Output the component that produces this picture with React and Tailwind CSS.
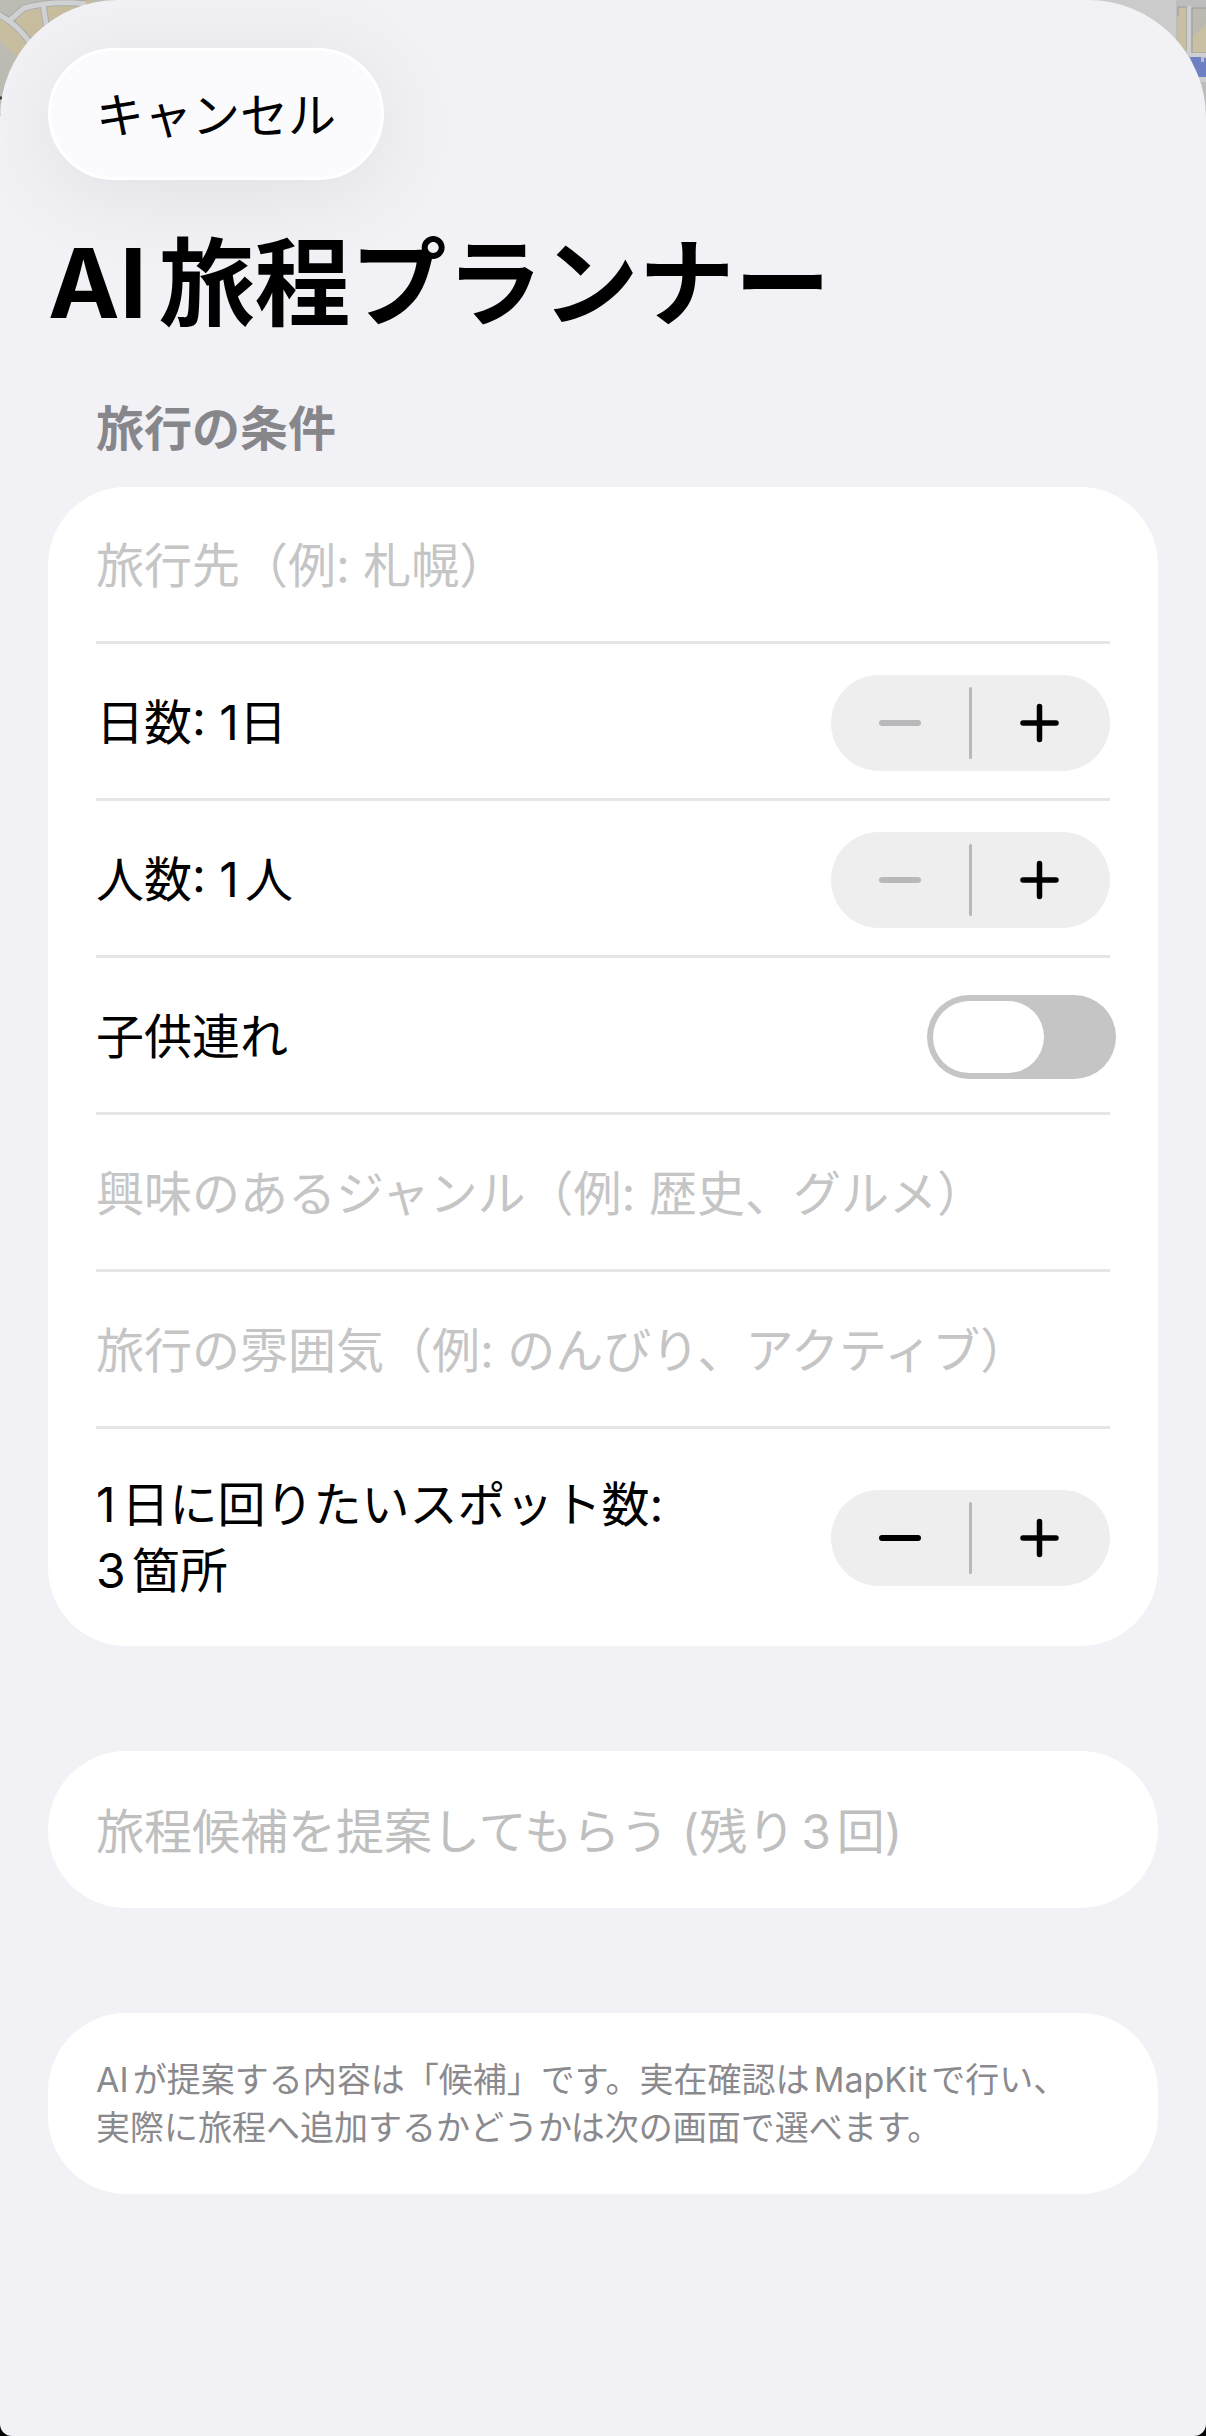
import { useState } from "react";

function Stepper({ label, value, min, onChange }) {
  return (
    <div className="flex h-24 w-[279px] shrink-0 items-center rounded-full bg-[#eeeeee]">
      <button
        type="button"
        aria-label={`${label}を減らす`}
        disabled={value <= min}
        onClick={() => onChange(value - 1)}
        className="flex h-full flex-1 items-center justify-center text-black disabled:text-[#b8b8ba]"
      >
        <svg className="h-12 w-12" viewBox="0 0 48 48" stroke="currentColor" strokeWidth="6" strokeLinecap="round">
          <path d="M6 24H42" />
        </svg>
      </button>
      <span className="h-[72px] w-[3px] rounded-full bg-[#b8b8ba]" />
      <button
        type="button"
        aria-label={`${label}を増やす`}
        onClick={() => onChange(value + 1)}
        className="flex h-full flex-1 items-center justify-center text-black"
      >
        <svg className="h-12 w-12" viewBox="0 0 48 48" stroke="currentColor" strokeWidth="5.5" strokeLinecap="round">
          <path d="M6 24H39M22.5 7.5V40.5" />
        </svg>
      </button>
    </div>
  );
}

function Row({ children }) {
  return (
    <div className="flex min-h-[157px] items-center justify-between gap-4 border-b-[3px] border-[#e6e6e6] pt-1 last:min-h-[217px] last:border-b-0 last:pt-0">
      {children}
    </div>
  );
}

function TextRow({ label, placeholder }) {
  return (
    <Row>
      <input
        type="text"
        aria-label={label}
        placeholder={placeholder}
        className="w-full bg-transparent leading-[66px] outline-none placeholder:text-[#c5c5c6]"
      />
    </Row>
  );
}

function MapBackdrop() {
  return (
    <div className="absolute inset-x-0 top-0 flex h-48 justify-between bg-[#cbcbcb]">
      <svg className="h-48 w-48" viewBox="0 0 192 192" fill="none">
        <path fill="#c9bd9f" d="M0 0H192V192H0Z" />
        <path fill="#bcbbb4" d="M0 40L22 62L14 192H0ZM0 0H70V3L24 9L10 20L0 12ZM92 0H192V10H92Z" />
        <path stroke="#aaacab" strokeWidth="7" d="M-2 14C12 21 24 33 34 48M10 20L24 8Q52 0 86 4M43 4L47 30" />
        <path stroke="#cfd1d2" strokeWidth="5" d="M-2 14C12 21 24 33 34 48M10 20L24 8Q52 0 86 4M43 4L47 30" />
        <path stroke="#333" strokeWidth="3" d="M0 98H4M0 115H2" />
      </svg>
      <svg className="h-48 w-[30px]" viewBox="0 0 30 192">
        <path fill="#bdbdbd" d="M0 0H30V192H0Z" />
        <path fill="#c9bfa3" d="M2 7H11V50H2ZM16 38L30 24V53H16Z" />
        <path fill="#bcb9b0" d="M16 8H30V24L16 38Z" />
        <path fill="none" stroke="#9a9aa0" d="M2 16V7H11V50M30 8H16V53H30" />
        <path fill="#cdcfd0" d="M11 6H15V56H11ZM14 53H30V57H14ZM20 77H30V82H20Z" />
        <path fill="#6f7fc4" d="M14 57H25V62H28V58H30V77H20Z" />
      </svg>
    </div>
  );
}

export default function App() {
  const [days, setDays] = useState(1);
  const [people, setPeople] = useState(1);
  const [spots, setSpots] = useState(3);
  const [withKids, setWithKids] = useState(false);

  return (
    <div className="relative bg-black font-['Inter','Noto_Sans_CJK_JP',sans-serif] text-[48px] leading-[66px] text-black [text-autospace:normal]" lang="ja">
      <MapBackdrop />
      <main className="relative min-h-screen rounded-t-[118px] rounded-b-[12px] bg-[#f1f1f6] px-12 pt-12 pb-24">
        <button
          type="button"
          className="flex h-[132px] items-center rounded-full border-[3px] border-white bg-[#fbfbfe] px-[45px] pt-1 shadow-[0_12px_90px_rgba(0,0,0,0.08)]"
        >
          キャンセル
        </button>

        <h1 className="mt-[43px] text-[96px] leading-[120px] font-bold">AI旅程プランナー</h1>

        <form onSubmit={(e) => e.preventDefault()}>
          <h2 className="mt-[53px] px-12 font-bold text-[#86868b]">旅行の条件</h2>

          <section className="mt-[25px] rounded-[78px] bg-white px-12">
            <TextRow label="旅行先" placeholder="旅行先（例: 札幌）" />
            <Row>
              <span className="[text-autospace:no-autospace]">日数: {days}日</span>
              <Stepper label="日数" value={days} min={1} onChange={setDays} />
            </Row>
            <Row>
              <span>人数: {people}人</span>
              <Stepper label="人数" value={people} min={1} onChange={setPeople} />
            </Row>
            <Row>
              <label htmlFor="kids">子供連れ</label>
              <input
                id="kids"
                type="checkbox"
                role="switch"
                checked={withKids}
                onChange={(e) => setWithKids(e.target.checked)}
                className="-mr-1.5 flex h-[84px] w-[189px] shrink-0 appearance-none rounded-full bg-[#c5c5c6] p-1.5 before:h-[72px] before:w-[111px] before:rounded-full before:bg-white checked:justify-end checked:bg-[#34c759]"
              />
            </Row>
            <TextRow label="興味のあるジャンル" placeholder="興味のあるジャンル（例: 歴史、グルメ）" />
            <TextRow label="旅行の雰囲気" placeholder="旅行の雰囲気（例: のんびり、アクティブ）" />
            <Row>
              <span>
                1日に回りたいスポット数:
                <br />
                {spots}箇所
              </span>
              <Stepper label="スポット数" value={spots} min={1} onChange={setSpots} />
            </Row>
          </section>

          <button
            type="submit"
            disabled
            className="mt-[105px] flex min-h-[157px] w-full items-center rounded-[78px] bg-white px-12 pt-1 text-left text-[#bfbfbf]"
          >
            旅程候補を提案してもらう (残り3回)
          </button>
        </form>

        <p className="mt-[105px] rounded-[78px] bg-white px-12 pt-[43px] pb-[42px] text-[34px] leading-[48px] text-[#8a8a8e]">
          AIが提案する内容は「候補」です。実在確認はMapKitで行い、
          <br />
          実際に旅程へ追加するかどうかは次の画面で選べます。
        </p>
      </main>
    </div>
  );
}
